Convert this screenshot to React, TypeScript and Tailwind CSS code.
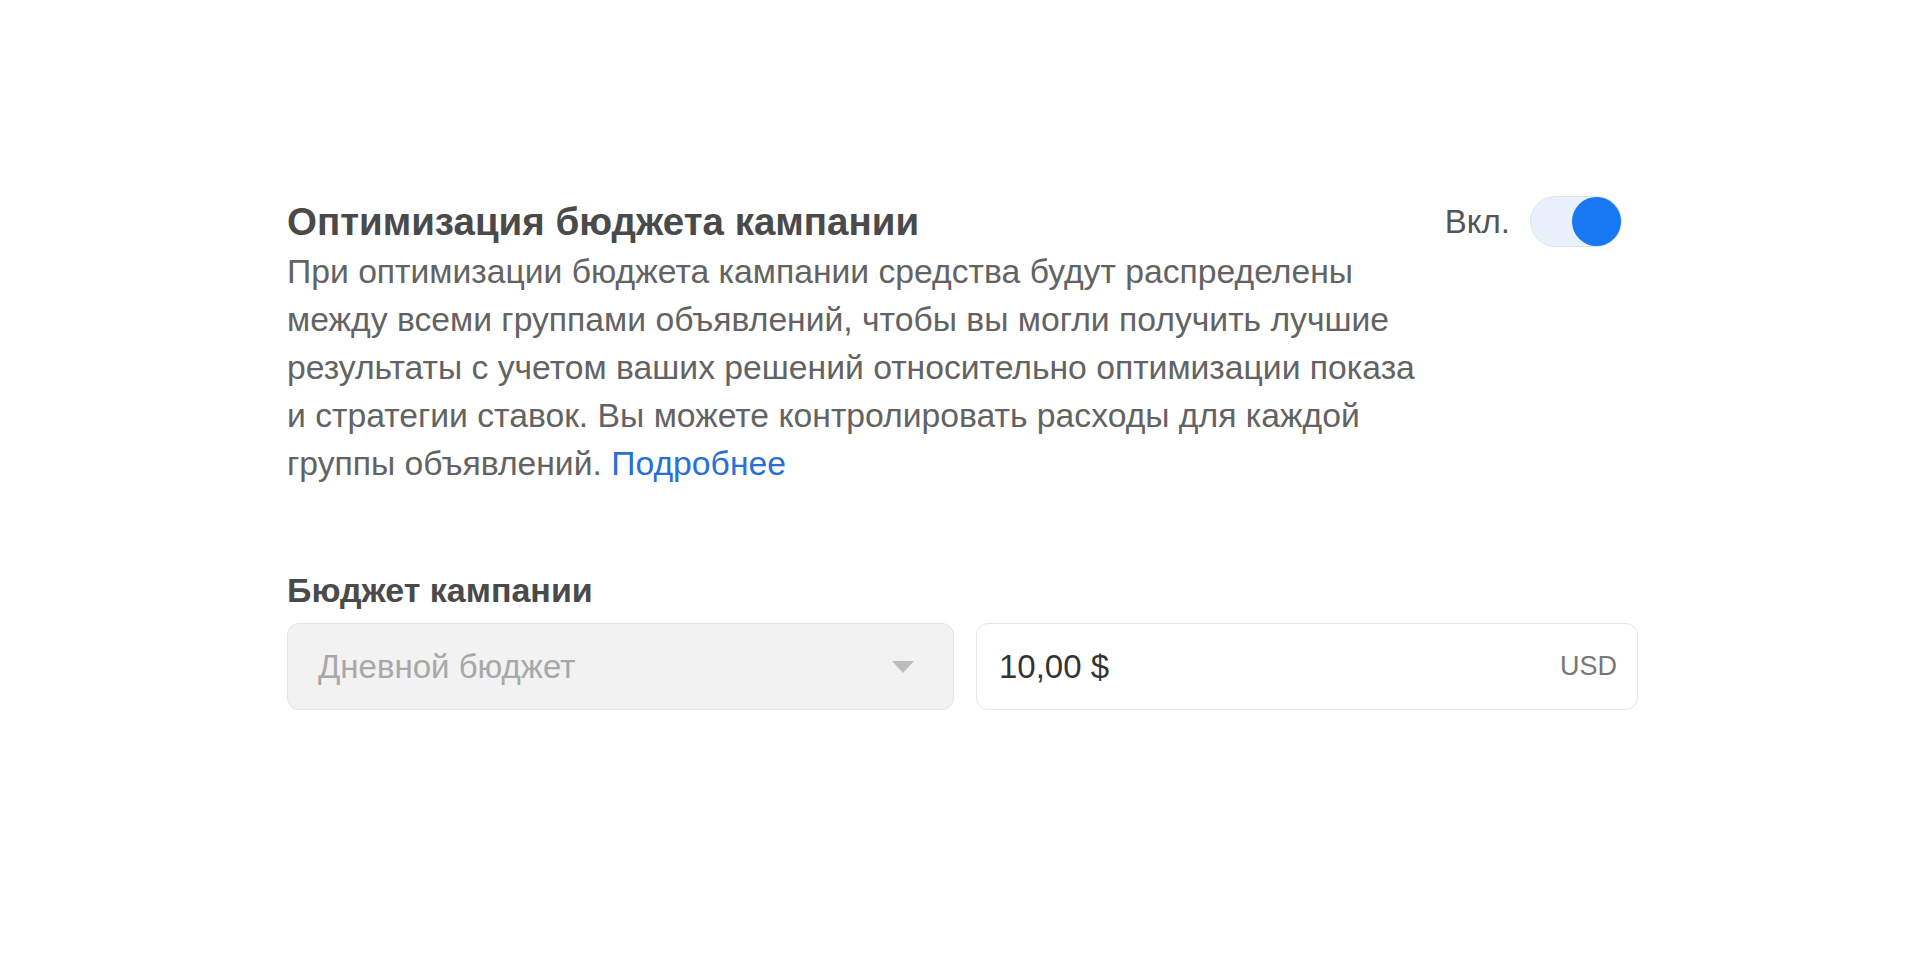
import { useState } from "react";

export default function App() {
  const [enabled, setEnabled] = useState(true);

  return (
    <div className="min-h-screen bg-white font-['Liberation_Sans',Arial,sans-serif]">
      <section className="ml-[287px] w-[1351px] pt-[196px]">
        {/* Header: title + switch */}
        <div className="flex items-center justify-between pr-4">
          <h2 className="text-[38.5px] font-bold leading-[44px] text-[#4a4a4a]">
            Оптимизация бюджета кампании
          </h2>
          <div className="flex items-center gap-[20px]">
            <span className="text-[33px] text-[#555]">Вкл.</span>
            <button
              type="button"
              role="switch"
              aria-checked={enabled}
              onClick={() => setEnabled(!enabled)}
              className={`flex h-[51px] w-[92px] items-center rounded-full border border-[#dfe4ec] bg-[#e9f1fd] ${
                enabled ? "justify-end" : "justify-start"
              }`}
            >
              <span className="h-[49px] w-[49px] rounded-full bg-[#1877f2]" />
            </button>
          </div>
        </div>

        <p className="max-w-[1140px] text-[33.7px] leading-[48px] text-[#636363]">
          При оптимизации бюджета кампании средства будут распределены между
          всеми группами объявлений, чтобы вы могли получить лучшие результаты
          с учетом ваших решений относительно оптимизации показа и стратегии
          ставок. Вы можете контролировать расходы для каждой группы
          объявлений.{" "}
          <a href="#" className="text-[#2a6fd8]">
            Подробнее
          </a>
        </p>

        {/* Budget */}
        <div className="mt-[83px]">
          <label className="block text-[34px] font-bold leading-[40px] text-[#4a4a4a]">
            Бюджет кампании
          </label>
          <div className="mt-[13px] flex gap-[22px]">
            <div className="flex h-[87px] w-[667px] items-center justify-between rounded-[12px] border border-[#e3e3e3] bg-[#f2f2f2] pl-[30px] pr-[39px]">
              <span className="text-[33px] text-[#a8a8a8]">Дневной бюджет</span>
              <span className="h-0 w-0 border-x-[11px] border-t-[12px] border-x-transparent border-t-[#bdbdbd]" />
            </div>
            <div className="flex h-[87px] flex-1 items-center justify-between rounded-[12px] border border-[#e6e6e6] bg-white pl-[22px] pr-[20px]">
              <span className="text-[33px] text-[#333]">10,00 $</span>
              <span className="text-[27px] text-[#777]">USD</span>
            </div>
          </div>
        </div>
      </section>
    </div>
  );
}
